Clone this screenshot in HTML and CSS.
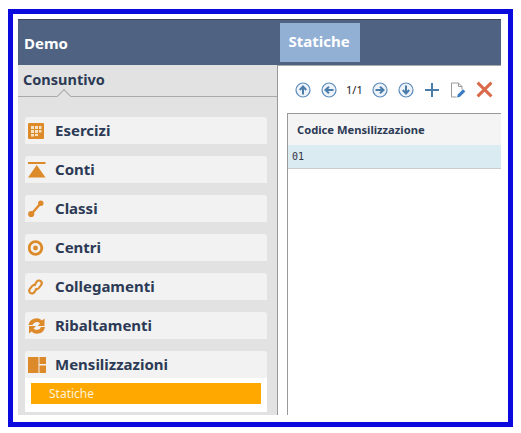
FILE: index.html
```html
<!DOCTYPE html>
<html lang="en">
<head>
    <meta charset="UTF-8">
    <meta name="viewport" content="width=device-width, initial-scale=1.0">
    <title>Demo - Statiche</title>
    <link rel="stylesheet" href="styles.css">
</head>
<body>
    <div class="frame">
        <div class="app">
            <div class="header">
                <div class="app-title">Demo</div>
                <div class="tab">Statiche</div>
            </div>
            <div class="main">
                <div class="sidebar">
                    <div class="section-title">Consuntivo</div>
                    <div class="menu">
                        <div class="menu-item">
                            <svg class="menu-icon" viewBox="0 0 18 18"><rect x="0" y="1" width="16" height="16" rx="1" fill="#dd8a2b"/><path d="M3 4h3v3H3zM7 4h3v3H7zM11 4h2.500v3H11zM3 8h3v3H3zM7 8h3v3H7zM11 8h2.500v2.500H11zM3 12h3v2.500H3zM7 12h3v2H7z" fill="#f6e2c4"/></svg>
                            <span>Esercizi</span>
                        </div>
                        <div class="menu-item">
                            <svg class="menu-icon" viewBox="0 0 18 18"><path d="M0 1h17.500v2H0zM8.750 4l8.750 12.500H0z" fill="#dd8a2b"/></svg>
                            <span>Conti</span>
                        </div>
                        <div class="menu-item">
                            <svg class="menu-icon" viewBox="0 0 18 18"><path d="M3.500 14L12.500 3.500" stroke="#dd8a2b" stroke-width="2.400" fill="none"/><circle cx="3.200" cy="14" r="3.100" fill="#dd8a2b"/><circle cx="12.800" cy="3.200" r="2.700" fill="#dd8a2b"/></svg>
                            <span>Classi</span>
                        </div>
                        <div class="menu-item">
                            <svg class="menu-icon" viewBox="0 0 18 18"><circle cx="7.500" cy="9" r="6.300" stroke="#dd8a2b" stroke-width="2.800" fill="none"/><circle cx="7.500" cy="9" r="2.400" fill="#dd8a2b"/></svg>
                            <span>Centri</span>
                        </div>
                        <div class="menu-item">
                            <svg class="menu-icon" viewBox="0 0 18 18" fill="none" stroke="#dd8a2b" stroke-width="2.100"><path d="M6.500 7l2-3c1.200-1.600 3-1.900 4.200-.9s1.400 2.800.2 4.300l-2 2.500c-1.100 1.300-2.700 1.500-3.700.7"/><path d="M8.500 11l-2 3c-1.200 1.600-3 1.900-4.200.9s-1.400-2.800-.2-4.300l2-2.500c1.100-1.300 2.700-1.500 3.700-.7"/></svg>
                            <span>Collegamenti</span>
                        </div>
                        <div class="menu-item">
                            <svg class="menu-icon" viewBox="0 0 18 18"><path d="M0.500 8A8 8 0 0 1 14 3.500L16.500 1.500V9H9.500L12 6.500A4.500 4.500 0 0 0 4.500 8z" fill="#dd8a2b"/><path d="M17 10A8 8 0 0 1 3.500 14.500L1 16.500V9H8L5.500 11.500A4.500 4.500 0 0 0 13 10z" fill="#dd8a2b"/></svg>
                            <span>Ribaltamenti</span>
                        </div>
                        <div class="menu-group">
                            <div class="menu-item">
                                <svg class="menu-icon" viewBox="0 0 18 18"><path d="M0 1h10.500v16H0zM11.500 1h6.500v7h-6.500zM11.500 9.500h6.500v7.500h-6.500z" fill="#dd8a2b"/></svg>
                                <span>Mensilizzazioni</span>
                            </div>
                            <div class="submenu">
                                <div class="submenu-item">Statiche</div>
                            </div>
                        </div>
                    </div>
                </div>
                <div class="content">
                    <div class="toolbar">
                        <svg class="nav-icon" viewBox="0 0 16 16"><circle cx="8" cy="8" r="7" class="ring"/><path d="M8 12.500V5M4.800 8L8 4.500 11.200 8" class="arrow"/></svg>
                        <svg class="nav-icon" viewBox="0 0 16 16"><circle cx="8" cy="8" r="7" class="ring"/><path d="M12.500 8H5M8 4.800L4.500 8 8 11.200" class="arrow"/></svg>
                        <span class="page-count">1/1</span>
                        <svg class="nav-icon" viewBox="0 0 16 16"><circle cx="8" cy="8" r="7" class="ring"/><path d="M3.500 8H11M8 4.800L11.500 8 8 11.200" class="arrow"/></svg>
                        <svg class="nav-icon" viewBox="0 0 16 16"><circle cx="8" cy="8" r="7" class="ring"/><path d="M8 3.500V11M4.800 8L8 11.500 11.200 8" class="arrow"/></svg>
                        <svg class="tool-icon" viewBox="0 0 16 16"><path d="M8 1v14M1 8h14" stroke="#4b7dab" stroke-width="2" fill="none"/></svg>
                        <svg class="tool-icon" viewBox="0 0 16 16"><path d="M1.500 1h7l3.500 3.500v3M8.500 1v3.500H12M1.500 1v14h5" stroke="#9a9a9a" fill="none"/><path d="M7 15.500l.8-3 5.200-5.200 2.300 2.300-5.200 5.200z" fill="#3d7cc0"/></svg>
                        <svg class="tool-icon close-icon" viewBox="0 0 16 16"><path d="M1.500 1.500l13 13M14.500 1.500l-13 13" stroke="#d9694a" stroke-width="2.800" fill="none"/></svg>
                    </div>
                    <div class="grid">
                        <div class="grid-head">Codice Mensilizzazione</div>
                        <div class="grid-row">01</div>
                    </div>
                </div>
            </div>
        </div>
    </div>
</body>
</html>
```

FILE: styles.css
```css
html, body {
    margin: 0;
    padding: 0;
    background: white;
}
body {
    font-family: "Noto Sans", Tahoma, sans-serif;
    width: 521px;
    height: 433px;
    overflow: hidden;
}
.frame {
    box-sizing: border-box;
    width: 505px;
    height: 418px;
    margin: 9px 0 0 8px;
    padding: 5px 7px 7px 5px;
    border: 5px solid #0a0adf;
    background: white;
}
.app {
    display: flex;
    flex-direction: column;
    width: 483px;
    height: 396px;
}
.header {
    display: flex;
    flex: none;
    height: 46px;
    box-sizing: border-box;
    background: #4f6282;
    border-top: 1px solid #3a4658;
}
.app-title {
    width: 262px;
    padding: 13px 0 0 6px;
    box-sizing: border-box;
    color: white;
    font-size: 15px;
    font-weight: bold;
}
.tab {
    width: 80px;
    height: 39px;
    margin-top: 3px;
    box-sizing: border-box;
    padding: 8px 2px 0 0;
    text-align: center;
    color: white;
    font-size: 15px;
    font-weight: bold;
    background: #92afd4;
}
.main {
    display: flex;
    flex: 1;
    min-height: 0;
}
.sidebar {
    width: 260px;
    flex: none;
    box-sizing: border-box;
    background: #e2e2e2;
    border-right: 1px solid #999;
}
.section-title {
    position: relative;
    height: 32px;
    box-sizing: border-box;
    padding: 4px 0 0 5px;
    border-bottom: 1px solid #aaa;
    color: #2c3a55;
    font-size: 14.500px;
    font-weight: bold;
}
.section-title::after {
    content: "";
    position: absolute;
    left: 41px;
    bottom: -5px;
    width: 9px;
    height: 9px;
    background: #e2e2e2;
    border-top: 1px solid #aaa;
    border-left: 1px solid #aaa;
    transform: rotate(45deg);
}
.menu {
    display: flex;
    flex-direction: column;
    gap: 12px;
    padding: 20px 0 0 7px;
    width: 242px;
}
.menu-item {
    display: flex;
    align-items: center;
    height: 27px;
    box-sizing: border-box;
    padding-left: 3px;
    background: #f2f2f2;
    border-radius: 3px 3px 0 0;
    color: #2c3a55;
    font-size: 15px;
    font-weight: bold;
}
.menu-item span {
    margin-top: -2px;
}
.menu-icon {
    width: 18px;
    height: 18px;
    margin-right: 9px;
    flex: none;
}
.submenu {
    height: 34px;
    box-sizing: border-box;
    padding: 5px 6px 0;
    background: white;
}
.submenu-item {
    height: 21px;
    line-height: 21px;
    padding-left: 18px;
    background: #ffa800;
    color: #fdf1d8;
    font-size: 12px;
}
.content {
    flex: 1;
    min-width: 0;
    background: white;
    border-top: 1px solid #aaa;
    padding-left: 9px;
}
.toolbar {
    display: flex;
    align-items: center;
    height: 47px;
    padding-left: 8px;
}
.nav-icon {
    width: 16px;
    height: 16px;
    margin-right: 10px;
    flex: none;
}
.ring {
    fill: #eef3f9;
    stroke: #5b8bbb;
    stroke-width: 1.200;
}
.arrow {
    fill: none;
    stroke: #4b7dab;
    stroke-width: 2;
}
.page-count {
    margin: 0 9px 0 -1px;
    color: #222;
    font-size: 11px;
}
.tool-icon {
    width: 16px;
    height: 16px;
    margin-right: 10px;
    flex: none;
}
.close-icon {
    width: 17px;
    height: 17px;
    margin-right: 0;
}
.grid {
    height: 302px;
    box-sizing: border-box;
    border-top: 1px solid #999;
    border-left: 1px solid #999;
}
.grid-head {
    height: 31px;
    line-height: 31px;
    padding-left: 9px;
    background: #f4f4f4;
    color: #2c3a55;
    font-size: 11.200px;
    font-weight: bold;
}
.grid-row {
    height: 24px;
    line-height: 23px;
    box-sizing: border-box;
    padding-left: 4px;
    background: #daecf2;
    border-bottom: 1px solid #ccc;
    color: #334;
    font-family: "DejaVu Sans Mono", monospace;
    font-size: 10px;
}
```
